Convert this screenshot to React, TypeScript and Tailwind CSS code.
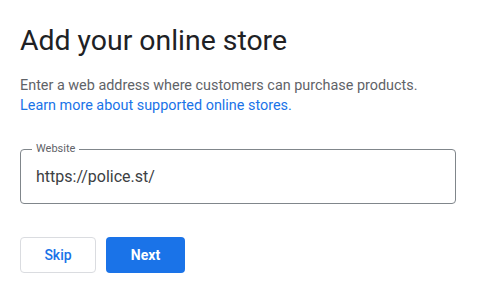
import React from "react";

export default function App() {
  return (
    <div className="w-[487px] h-[294px] bg-white pl-5 pr-8 pt-[24px]" style={{ fontFamily: "Roboto, 'Liberation Sans', sans-serif" }}>
      <h1 className="text-[28.4px] leading-[34px] text-[#202124] font-normal">Add your online store</h1>
      <div className="mt-[18px] text-[14.4px] leading-[20px] text-[#5f6368]">
        <p>Enter a web address where customers can purchase products.</p>
        <a className="text-[#1a73e8]">Learn more about supported online stores.</a>
      </div>
      <div className="relative mt-[33px] w-[436px] h-[55px] border border-[#80868b] rounded-[4px]">
        <span className="absolute -top-[8px] left-[11px] bg-white px-[4px] text-[11px] leading-[14px] text-[#5f6368]">Website</span>
        <div className="pl-[15px] pt-[16px] text-[16px] leading-[22px] text-[#3c4043]">https://police.st/</div>
      </div>
      <div className="mt-[33px] flex gap-[10px]">
        <button className="w-[76px] h-[36px] border border-[#dadce0] rounded-[4px] text-[14px] font-medium text-[#1a73e8]">Skip</button>
        <button className="w-[79px] h-[36px] rounded-[4px] bg-[#1a73e8] text-[14px] font-bold text-white">Next</button>
      </div>
    </div>
  );
}
